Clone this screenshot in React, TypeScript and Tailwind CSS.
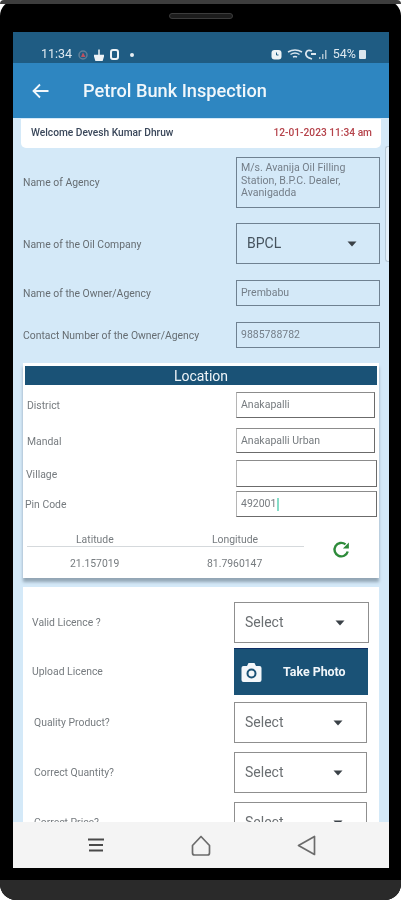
function Caret({ className = '' }: { className?: string }) {
  return (
    <svg width="10" height="6" viewBox="0 0 10 6" className={className}>
      <path d="M0.5 0.5h9L5 5.5z" fill="#3a4147" />
    </svg>
  )
}

function ReadOnlyRow({ label, value, mt }: { label: string; value: string; mt: string }) {
  return (
    <div className={`flex items-center justify-between pl-[10px] pr-[9px] ${mt}`}>
      <span className="relative top-px text-[10.4px] leading-3 text-[#666d72]">{label}</span>
      <div className="flex h-[26px] w-[144px] items-center border-[1.5px] border-[#6f8191] pl-[4px] text-[10.5px] text-[#747e88]">
        {value}
      </div>
    </div>
  )
}

function LocationRow({
  label,
  value,
  mt,
  height,
  width,
  labelPad,
  caret,
}: {
  label: string
  value: string
  mt: string
  height: string
  width: string
  labelPad: string
  caret?: boolean
}) {
  return (
    <div className={`flex items-center justify-between ${mt} ${labelPad}`}>
      <span className="relative top-px text-[10.4px] leading-3 text-[#767b7f]">{label}</span>
      <div
        className={`flex items-center border-[1.5px] border-t-[#8c8c8c] border-r-[#6b6b6b] border-b-[#6b6b6b] border-l-[#b5b5b5] pl-[4px] text-[10.5px] text-[#767b7f] ${height} ${width}`}
      >
        {value}
        {caret && <span className="ml-px h-[13px] w-[2px] bg-[#86dcc8]" />}
      </div>
    </div>
  )
}

function SelectRow({ label, mt, width, pad }: { label: string; mt: string; width: string; pad: string }) {
  return (
    <div className={`flex items-center justify-between ${mt} ${pad}`}>
      <span className="text-[10.4px] leading-3 text-[#767b7f]">{label}</span>
      <div
        className={`flex h-[41px] shrink-0 items-center justify-between border-[1.5px] border-[#8f8f8f] pl-[10px] pr-[23px] text-[14px] text-[#6b6f72] ${width}`}
      >
        Select
        <Caret />
      </div>
    </div>
  )
}

export default function App() {
  return (
    <div className="h-[900px] w-[401px] overflow-hidden bg-white font-['Roboto',sans-serif] blur-[0.35px]">
      <div className="relative flex h-full flex-col rounded-[16px] bg-black pb-[32px] pl-[13px] pr-[12px] pt-[32px]">
        {/* Speaker and frame edges */}
        <div className="absolute left-[169px] top-[13px] h-[6px] w-[64px] rounded-full border border-[#3c3c3c] bg-[#1c1c1c]" />
        <div className="absolute inset-x-0 top-0 h-[4px] rounded-t-[16px] bg-[#3d3d3d]" />
        <div className="absolute inset-x-0 bottom-0 h-[20px] rounded-b-[16px] bg-[#2a2a2a]" />

        <div className="relative z-10 flex h-full flex-col overflow-hidden">
          {/* Status bar */}
          <div className="flex h-[31px] shrink-0 items-center justify-between bg-[#1f5c83] pl-[28px] pr-[23px] pt-[14px] text-[12.5px] text-[#dfe9f0]">
            <div className="flex items-center">
              <span>11:34</span>
              <svg width="10" height="10" viewBox="0 0 10 10" fill="none" className="ml-[6px]">
                <circle cx="5" cy="5" r="4" stroke="#5f7f98" strokeWidth="1.500" />
                <path d="M5 2.500L7.500 7H3z" fill="#c0505f" />
              </svg>
              <svg width="10" height="12" viewBox="0 0 10 12" className="ml-[6px]">
                <path d="M5 0.500v6M0.500 6.500h9L8 11.500H2z" stroke="#eef3f6" strokeWidth="1.500" fill="#eef3f6" />
              </svg>
              <span className="ml-[6px] h-[11px] w-[9px] rounded-[3px] border-[2.500px] border-[#eef3f6]" />
              <span className="ml-[11px] h-[4px] w-[4px] rounded-full bg-[#e8eef2]" />
            </div>
            <div className="flex items-center">
              <svg width="11" height="11" viewBox="0 0 11 11">
                <rect x="0.500" y="1" width="10" height="9.500" rx="3" fill="#eef3f6" />
                <path d="M5.500 3.500v2.500h2" stroke="#1f5c83" strokeWidth="1" fill="none" />
              </svg>
              <svg width="16" height="11" viewBox="0 0 16 11" fill="none" stroke="#dbe6ee" strokeWidth="1.500" className="ml-[5px]">
                <path d="M1 3q7-4 14 0M3.500 5.500q4.500-3 9 0M6 8q2-1 4 0" />
              </svg>
              <svg width="13" height="11" viewBox="0 0 13 11" fill="none" stroke="#dbe6ee" strokeWidth="1.800" className="ml-px">
                <path d="M8 2Q3 0 2 4t6 6M7 5h5" />
              </svg>
              <svg width="8" height="9" viewBox="0 0 8 9" fill="#a9bfce" className="ml-[2px]">
                <path d="M0 7h1.500v2H0zM3 4h1.500v5H3zM6 0h1.500v9H6z" />
              </svg>
              <span className="ml-[6px]">54%</span>
              <span className="ml-[3px] h-[9px] w-[7px] rounded-[1px] bg-[#dbe6ee]" />
            </div>
          </div>

          {/* App bar */}
          <div className="flex h-[55px] shrink-0 items-center bg-[#2e86c1] pl-[19px] text-white">
            <svg width="17" height="16" viewBox="0 0 17 16" fill="none" stroke="#f2f7fb" strokeWidth="1.800">
              <path d="M16.500 8H1.500M8 1.500L1.500 8L8 14.500" />
            </svg>
            <h1 className="ml-[34px] text-[18.2px] font-medium leading-6 text-[#f1f7fb]">Petrol Bunk Inspection</h1>
          </div>

          {/* Scrolling content */}
          <div className="relative min-h-0 flex-1 overflow-hidden bg-[#d4e9f8]">
            <div className="absolute right-0 top-[28px] h-[116px] w-[4px] rounded-l-[3px] border border-r-0 border-[#b7c9d6] bg-[#e4f0f9]" />

            <div className="mx-[8px] mt-px flex h-[29px] items-center justify-between rounded-b-[5px] bg-white pb-[2px] pl-[10px] pr-[9px] text-[10.2px] font-medium">
              <span className="text-[#3a475a]">Welcome Devesh Kumar Dhruw</span>
              <span className="text-[#b5424a]">12-01-2023 11:34 am</span>
            </div>

            <div className="mt-[9px] flex items-center justify-between pl-[10px] pr-[9px]">
              <span className="text-[10.4px] leading-3 text-[#666d72]">Name of Agency</span>
              <div className="h-[51px] w-[144px] border-[1.5px] border-[#6f8191] pl-[4px] pr-[16px] pt-[4px] text-[10.6px] leading-[12.500px] text-[#747e88]">
                M/s. Avanija Oil Filling Station, B.P.C. Dealer, Avanigadda
              </div>
            </div>

            <div className="mt-[15px] flex items-center justify-between pl-[10px] pr-[9px]">
              <span className="relative top-px text-[10.4px] leading-3 text-[#666d72]">Name of the Oil Company</span>
              <div className="flex h-[41px] w-[144px] items-center justify-between border-[1.5px] border-[#6f8191] pl-[10px] pr-[22px] text-[14px] text-[#46535e]">
                BPCL
                <Caret />
              </div>
            </div>

            <ReadOnlyRow label="Name of the Owner/Agency" value="Prembabu" mt="mt-[16px]" />
            <ReadOnlyRow label="Contact Number of the Owner/Agency" value="9885788782" mt="mt-[16px]" />

            {/* Location card */}
            <div className="mx-[10px] mt-[15px] h-[215px] bg-white px-[2px] pt-[3px] shadow-[0_4px_3px_#93a6b5]">
              <div className="flex h-[19px] items-center justify-center bg-[#1a5276] pt-px text-[14px] text-[#eef4f8]">
                Location
              </div>
              <LocationRow label="District" value="Anakapalli" mt="mt-[7px]" height="h-[26px]" width="w-[139px]" labelPad="pl-[2px] pr-[2px]" />
              <LocationRow label="Mandal" value="Anakapalli Urban" mt="mt-[10px]" height="h-[25px]" width="w-[139px]" labelPad="pl-[2px] pr-[2px]" />
              <LocationRow label="Village" value="" mt="mt-[7px]" height="h-[27px]" width="w-[141px]" labelPad="pl-[1px]" />
              <LocationRow label="Pin Code" value="492001" mt="mt-[4px]" height="h-[26px]" width="w-[141px]" labelPad="pl-[0px]" caret />

              <div className="mt-[11px] flex">
                <div className="ml-[2px] w-[277px] text-[10.4px] text-[#767b7f]">
                  <div className="flex h-[19px] items-start border-b border-[#d5d9dc] pt-[4px]">
                    <span className="w-[185px] pl-[49px]">Latitude</span>
                    <span>Longitude</span>
                  </div>
                  <div className="flex h-[33px] items-center">
                    <span className="w-[180px] pl-[43px]">21.157019</span>
                    <span>81.7960147</span>
                  </div>
                </div>
                <svg width="18" height="18" viewBox="0 0 24 24" fill="none" stroke="#2e8b3a" strokeWidth="3.200" className="ml-[28px] mt-[13px]">
                  <path d="M21 14a9 9 0 1 1-3-9.500" />
                  <path d="M22.500 2v8h-8z" fill="#2e8b3a" stroke="none" />
                </svg>
              </div>
            </div>

            {/* Checklist card */}
            <div className="mx-[10px] mt-[9px] h-[300px] bg-white pt-[15px]">
              <SelectRow label="Valid Licence ?" mt="" width="w-[135px]" pad="pl-[9px] pr-[10px]" />
              <div className="mt-[5px] flex items-center justify-between pl-[9px] pr-[11px]">
                <span className="text-[10.4px] leading-3 text-[#767b7f]">Upload Licence</span>
                <div className="flex h-[47px] w-[134px] items-center border-t border-[#0f2f66] bg-[#1a5276] pl-[7px]">
                  <svg width="21" height="21" viewBox="0 0 21 21">
                    <path
                      d="M2.500 4h3.500l1.500-3h6l1.500 3h3.500a2 2 0 0 1 2 2v12a2 2 0 0 1-2 2h-16a2 2 0 0 1-2-2v-12a2 2 0 0 1 2-2z"
                      fill="#f4f7fa"
                    />
                    <circle cx="10.500" cy="11.500" r="4" fill="none" stroke="#1a5276" strokeWidth="2" />
                  </svg>
                  <span className="ml-[21px] text-[12.4px] font-bold text-[#f1f6fa]">Take Photo</span>
                </div>
              </div>
              <SelectRow label="Quality Product?" mt="mt-[7px]" width="w-[133px]" pad="pl-[11px] pr-[12px]" />
              <SelectRow label="Correct Quantity?" mt="mt-[9px]" width="w-[133px]" pad="pl-[11px] pr-[12px]" />
              <SelectRow label="Correct Price?" mt="mt-[9px]" width="w-[133px]" pad="pl-[11px] pr-[12px]" />
            </div>
          </div>

          {/* Android nav bar */}
          <div className="relative flex h-[46px] shrink-0 items-center bg-[#f4f4f4]">
            <svg width="16" height="14" viewBox="0 0 16 14" fill="#4a4a4a" className="ml-[75px]">
              <path d="M0 0.500h16v2H0zM1 6h14v2H1zM1 11.500h14v2H1z" />
            </svg>
            <svg width="20" height="21" viewBox="0 0 20 21" fill="none" stroke="#6b6b6b" strokeWidth="1.700" className="ml-[87px]">
              <path d="M10 1.500L1.500 10.500V18a2 2 0 0 0 2 2h13a2 2 0 0 0 2-2V10.500z" strokeLinejoin="round" />
            </svg>
            <svg width="19" height="21" viewBox="0 0 19 21" fill="none" stroke="#6b6b6b" strokeWidth="1.700" className="ml-[86px]">
              <path d="M17.500 1.500V19.500L1.500 10.500z" strokeLinejoin="round" />
            </svg>
          </div>
        </div>
      </div>
    </div>
  )
}
